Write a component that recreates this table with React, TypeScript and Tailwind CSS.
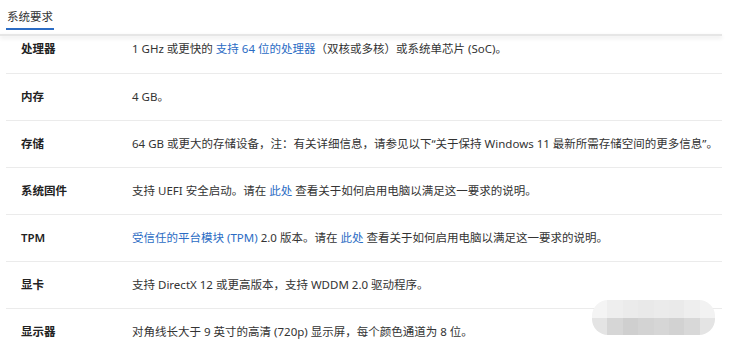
import React from "react";

const L = ({ children }: { children: React.ReactNode }) => (
  <span className="text-[#2b6cc4]">{children}</span>
);

const rows: { label: string; value: React.ReactNode }[] = [
  {
    label: "处理器",
    value: (
      <>
        1 GHz 或更快的 <L>支持 64 位的处理器</L>（双核或多核）或系统单芯片 (SoC)。
      </>
    ),
  },
  { label: "内存", value: <>4 GB。</> },
  {
    label: "存储",
    value: (
      <>64 GB 或更大的存储设备，注：有关详细信息，请参见以下“关于保持 Windows 11 最新所需存储空间的更多信息”。</>
    ),
  },
  {
    label: "系统固件",
    value: (
      <>
        支持 UEFI 安全启动。请在 <L>此处</L> 查看关于如何启用电脑以满足这一要求的说明。
      </>
    ),
  },
  {
    label: "TPM",
    value: (
      <>
        <L>受信任的平台模块 (TPM)</L> 2.0 版本。请在 <L>此处</L> 查看关于如何启用电脑以满足这一要求的说明。
      </>
    ),
  },
  { label: "显卡", value: <>支持 DirectX 12 或更高版本，支持 WDDM 2.0 驱动程序。</> },
  { label: "显示器", value: <>对角线长大于 9 英寸的高清 (720p) 显示屏，每个颜色通道为 8 位。</> },
];

export default function App() {
  return (
    <div className="relative w-[731px] h-[350px] overflow-hidden bg-white font-['Noto_Sans','Noto_Sans_CJK_SC',sans-serif] text-[11.5px] text-[#333]">
      <div className="h-[34px] pl-[6px] flex">
        <div className="flex flex-col w-[48px]">
          <div className="h-[28px] flex items-center justify-center text-[#333] pt-[6px]">系统要求</div>
          <div className="h-[2px] bg-[#2b6cc4]" />
        </div>
      </div>
      <div className="w-[722px] h-[2px] bg-[#e6e6e6] shadow-[0_2px_4px_rgba(0,0,0,0.12)] relative z-10" />
      <div className="ml-[6px] w-[716px]">
        {rows.map((r, i) => (
          <div
            key={r.label}
            className={
              "flex items-center border-b border-[#ebebeb] " +
              (i === 0 ? "h-[38px] pb-[11px]" : "h-[47px]")
            }
          >
            <div className="w-[126px] pl-[15px] font-semibold text-[#222]">{r.label}</div>
            <div className="flex-1 whitespace-nowrap">{r.value}</div>
          </div>
        ))}
      </div>
      <div className="absolute left-[592px] top-[300px] w-[123px] h-[35px] rounded-[16px] overflow-hidden grid grid-cols-8 grid-rows-2 blur-[0.6px]">
        {[
          "#f4f4f4", "#eeeeee", "#ebebeb", "#e9e9e9", "#ebebeb", "#eaeaea", "#eeeeee", "#f2f2f2",
          "#e4e4e4", "#d6d6d6", "#cfcfcf", "#d3d3d3", "#d6d6d6", "#d2d2d2", "#d8d8d8", "#e4e4e4",
        ].map((c, i) => (
          <div key={i} style={{ backgroundColor: c }} />
        ))}
      </div>
    </div>
  );
}
